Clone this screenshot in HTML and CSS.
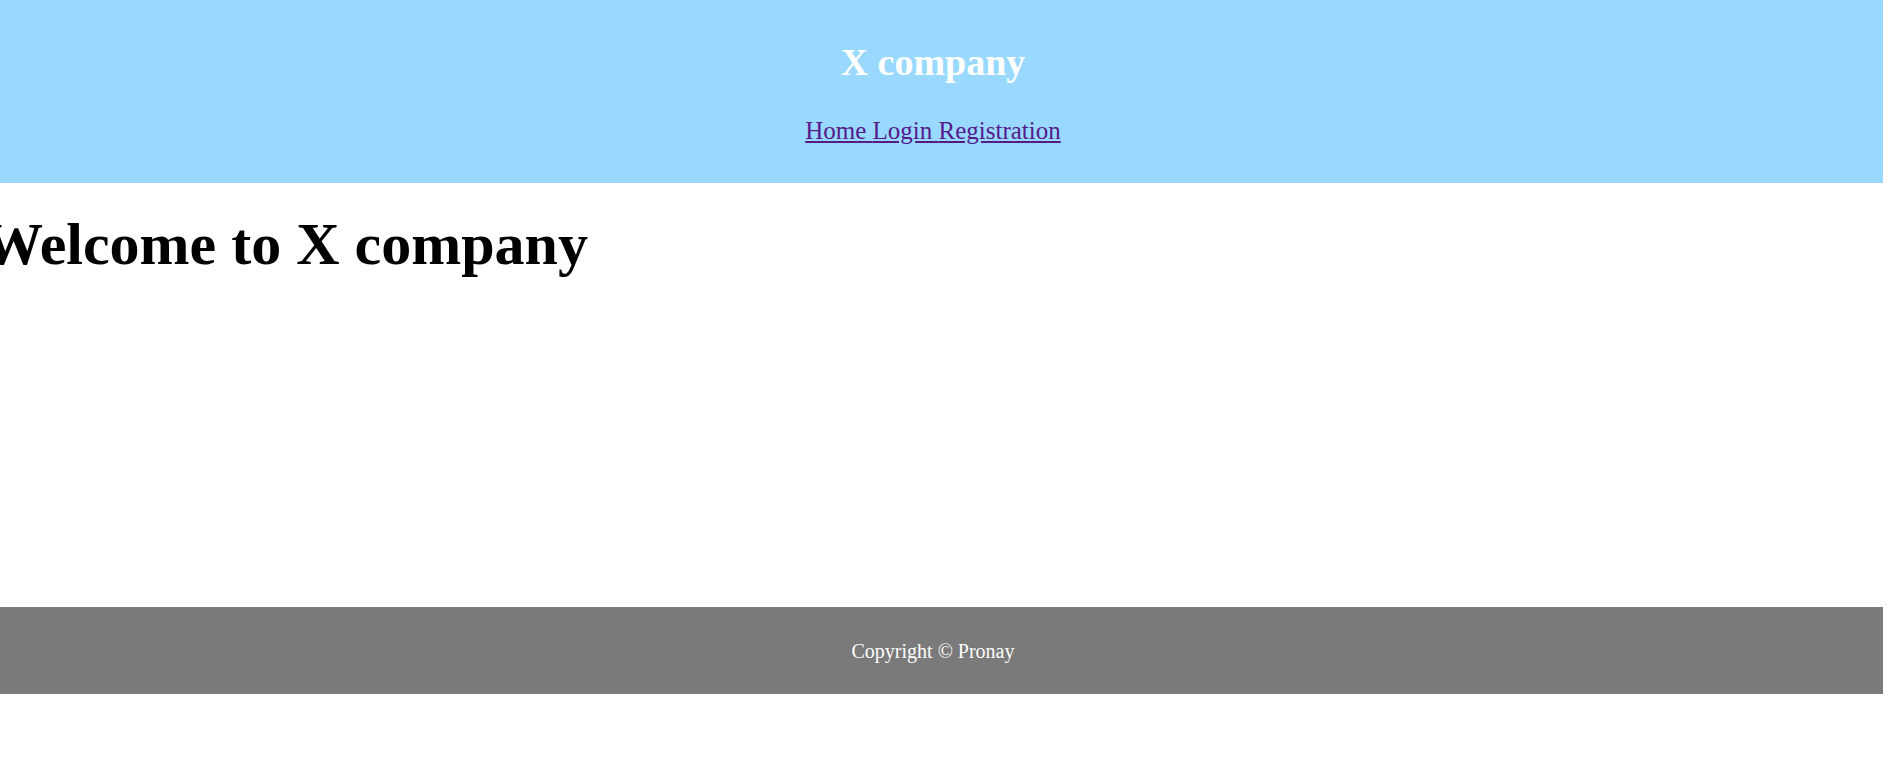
FILE: index.html
```html
<!DOCTYPE html>
<html lang="en">
<head>
<meta charset="utf-8">
<title>X company</title>
<link rel="stylesheet" href="styles.css">
</head>
<body>
<header class="site-header">
  <h1 class="brand">X company</h1>
  <nav class="nav"><a href="#" class="nav-link">Home </a><a href="#" class="nav-link">Login </a><a href="#" class="nav-link">Registration</a></nav>
</header>
<main class="main">
  <h1 class="welcome">Welcome to X company</h1>
</main>
<footer class="site-footer">
  <p class="copy">Copyright © Pronay</p>
</footer>
</body>
</html>
```
FILE: styles.css
```css
html, body {
  margin: 0;
  padding: 0;
  background: #ffffff;
  overflow: hidden;
}
body {
  font-family: "Liberation Serif", "Times New Roman", serif;
  width: 1893px;
  height: 760px;
}
.site-header {
  width: 1883px;
  box-sizing: border-box;
  background: #99d9ff;
  padding: 41px 17px 38px 0;
  text-align: center;
}
.brand {
  margin: 0;
  font-size: 38px;
  line-height: 42px;
  font-weight: bold;
  color: #ffffff;
}
.nav {
  margin-top: 33px;
  font-size: 25px;
  line-height: 29px;
}
.nav-link {
  color: #551a8b;
  text-decoration: underline;
}
.main {
  height: 424px;
  overflow: hidden;
}
.welcome {
  margin: 28px 0 0 -17px;
  font-size: 60px;
  line-height: 66px;
  font-weight: bold;
  color: #000000;
  white-space: nowrap;
}
.site-footer {
  width: 1883px;
  box-sizing: border-box;
  background: #7a7a7a;
  padding: 33px 17px 31px 0;
  text-align: center;
}
.copy {
  margin: 0;
  font-size: 20px;
  line-height: 23px;
  color: #ffffff;
}
```
